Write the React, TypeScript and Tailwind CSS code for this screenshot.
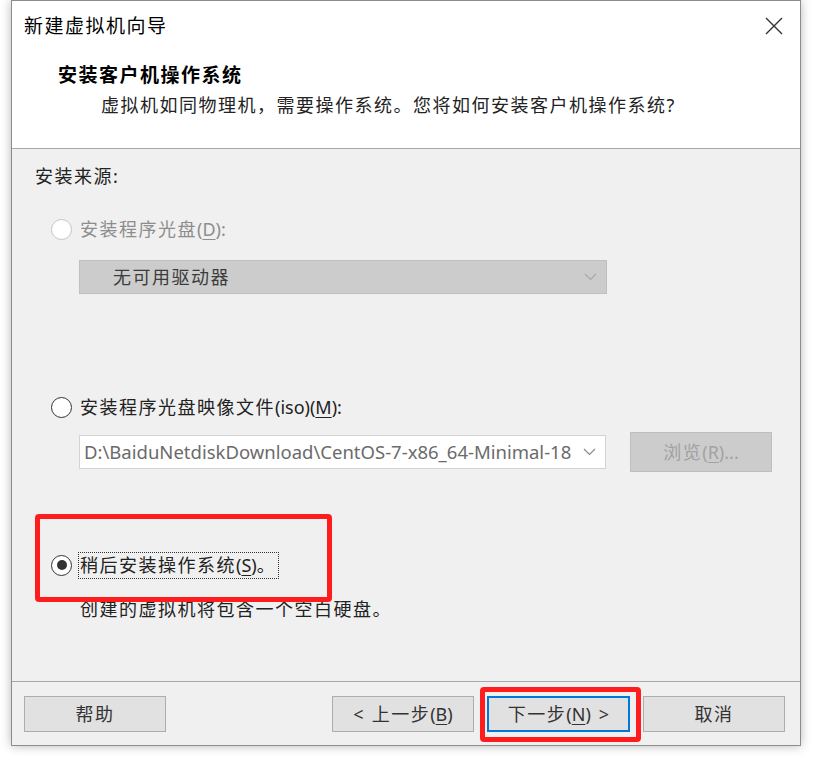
import React from "react";

const font = "font-['Noto_Sans','Noto_Sans_CJK_SC',sans-serif]";

function Zh({ children }: { children: React.ReactNode }) {
  return <span className="tracking-[1.5px]">{children}</span>;
}

function Key({ children }: { children: React.ReactNode }) {
  return <span className="underline underline-offset-[3px] decoration-1">{children}</span>;
}

function Radio({ checked, disabled }: { checked?: boolean; disabled?: boolean }) {
  return (
    <span
      className={
        disabled
          ? "flex h-[21px] w-[21px] shrink-0 items-center justify-center rounded-full border border-[#c4c4c4] bg-white"
          : "flex h-[21px] w-[21px] shrink-0 items-center justify-center rounded-full border-[1.5px] border-[#333] bg-white"
      }
    >
      {checked && <span className="h-[10px] w-[10px] rounded-full bg-[#333]" />}
    </span>
  );
}

function Chevron({ color }: { color: string }) {
  return (
    <svg width="13" height="8" viewBox="0 0 13 8" fill="none">
      <path d="M1 1l5.5 5.5L12 1" stroke={color} strokeWidth="1.2" />
    </svg>
  );
}

function Button({
  children,
  primary,
}: {
  children: React.ReactNode;
  primary?: boolean;
}) {
  return (
    <div
      className={
        primary
          ? "flex h-[36px] w-[143px] items-center justify-center border-2 border-[#0078d7] bg-[#e1e1e1] text-[18px] text-[#333]"
          : "flex h-[36px] w-[142px] items-center justify-center border border-[#adadad] bg-[#e1e1e1] text-[18px] text-[#333]"
      }
    >
      {children}
    </div>
  );
}

export default function App() {
  return (
    <div className={`relative h-[759px] w-[813px] bg-white pl-[11px] pr-[12px] pb-[13px] ${font}`}>
      <div className="flex h-[746px] w-[790px] flex-col border border-[#8c8c8c] shadow-[0_0_10px_rgba(0,0,0,0.28)]">
        {/* header */}
        <div className="h-[148px] shrink-0 border-b border-[#a8a8a8] bg-white">
          <div className="flex h-[50px] items-center justify-between pl-[12px] pr-[17px]">
            <span className="text-[19px] text-black">
              <Zh>新建虚拟机向导</Zh>
            </span>
            <svg width="18" height="18" viewBox="0 0 18 18" fill="none">
              <path d="M1 1l16 16M17 1L1 17" stroke="#333" strokeWidth="1.4" />
            </svg>
          </div>
          <div className="mt-[10px] flex h-[28px] items-center pl-[46px] text-[19px] font-bold text-black">
            <Zh>安装客户机操作系统</Zh>
          </div>
          <div className="mt-[2px] flex h-[28px] items-center pl-[89px] text-[18px] text-[#222]">
            <Zh>虚拟机如同物理机，需要操作系统。您将如何安装客户机操作系统</Zh>?
          </div>
        </div>

        {/* body */}
        <div className="flex flex-1 flex-col bg-[#f0f0f0]">
          <div className="flex h-[54px] items-center pl-[23px] text-[18px] text-[#222]">
            <Zh>安装来源</Zh>:
          </div>

          <div className="mt-[9px] flex h-[34px] items-center gap-[8px] pl-[39px] text-[18px] text-[#8d8d8d]">
            <Radio disabled />
            <span>
              <Zh>安装程序光盘</Zh>(<Key>D</Key>):
            </span>
          </div>

          <div className="ml-[67px] mt-[14px] flex h-[34px] w-[528px] items-center justify-between border border-[#bfbfbf] bg-[#cccccc] pl-[33px] pr-[9px] text-[18px] text-[#3c3c3c]">
            <Zh>无可用驱动器</Zh>
            <Chevron color="#a8a8a8" />
          </div>

          <div className="mt-[96px] flex h-[34px] items-center gap-[8px] pl-[39px] text-[18px] text-[#222]">
            <Radio />
            <span>
              <Zh>安装程序光盘映像文件</Zh>(iso)(<Key>M</Key>):
            </span>
          </div>

          <div className="mt-[8px] flex h-[40px] items-center pl-[67px]">
            <div className="flex h-[34px] w-[527px] items-center border border-[#d4d4d4] bg-white pl-[4px] pr-[9px]">
              <span className="w-[490px] overflow-hidden whitespace-nowrap text-[18.5px] text-[#6b6b6b]">
                D:\BaiduNetdiskDownload\CentOS-7-x86_64-Minimal-18
              </span>
              <span className="ml-auto">
                <Chevron color="#8a8a8a" />
              </span>
            </div>
            <div className="ml-[24px] flex h-[40px] w-[142px] items-center justify-center border border-[#bfbfbf] bg-[#cccccc] text-[18px] text-[#a2a2a2]">
              <Zh>浏览</Zh>(<Key>R</Key>)...
            </div>
          </div>

          <div className="mt-[76px] flex h-[34px] items-center gap-[6px] pl-[39px] text-[18px] text-[#222]">
            <Radio checked />
            <span className="flex h-[27px] items-center border border-dotted border-[#333] pl-[1px] pr-[3px]">
              <Zh>稍后安装操作系统</Zh>(<Key>S</Key>)。
            </span>
          </div>

          <div className="mt-[15px] flex h-[24px] items-center pl-[68px] text-[18px] text-[#222]">
            <Zh>创建的虚拟机将包含一个空白硬盘。</Zh>
          </div>
        </div>

        {/* footer */}
        <div className="flex h-[64px] shrink-0 items-start gap-[13px] border-t border-[#a8a8a8] bg-[#f0f0f0] pl-[12px] pt-[14px]">
          <Button>
            <Zh>帮助</Zh>
          </Button>
          <div className="ml-[153px] flex gap-[13px]">
            <Button>
              <span className="mr-[8px]">&lt;</span>
              <Zh>上一步</Zh>(<Key>B</Key>)
            </Button>
            <Button primary>
              <Zh>下一步</Zh>(<Key>N</Key>)
              <span className="ml-[8px]">&gt;</span>
            </Button>
            <Button>
              <Zh>取消</Zh>
            </Button>
          </div>
        </div>
      </div>

      {/* red annotation boxes */}
      <div className="absolute left-[35px] top-[514px] h-[88px] w-[297px] rounded-[4px] border-[5px] border-[#ff1c1c]" />
      <div className="absolute left-[480px] top-[687px] h-[55px] w-[161px] rounded-[4px] border-[5px] border-[#ff1c1c]" />
    </div>
  );
}
